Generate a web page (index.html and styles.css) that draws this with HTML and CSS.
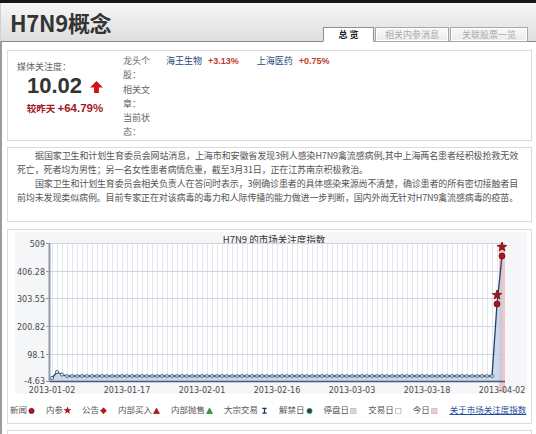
FILE: index.html
```html
<!DOCTYPE html>
<html lang="zh-CN">
<head>
<meta charset="utf-8">
<title>H7N9概念</title>
<link rel="stylesheet" href="styles.css">
</head>
<body>
<div class="topbar"></div>
<header class="header">
  <h1 class="title">H7N9概念</h1>
  <nav class="tabs">
    <a class="tab tab-1 active">总 览</a>
    <a class="tab tab-2">相关内参消息</a>
    <a class="tab tab-3">关联股票一览</a>
  </nav>
</header>
<main class="main">
  <section class="box info">
    <div class="score">
      <div class="score-label">媒体关注度：</div>
      <div class="score-value"><span class="num">10.02</span><svg class="arrow" viewBox="0 0 14 13"><polygon points="7,0 14,7 9.6,7 9.6,13 4.4,13 4.4,7 0,7" fill="#d0121b"/></svg></div>
      <div class="score-delta">较昨天 <b>+64.79%</b></div>
    </div>
    <div class="labels">
      <div>龙头个股：</div>
      <div>相关文章：</div>
      <div>当前状态：</div>
    </div>
    <div class="leaders">
      <span class="stock">海王生物</span><span class="chg">+3.13%</span>
      <span class="stock second">上海医药</span><span class="chg">+0.75%</span>
    </div>
  </section>

  <section class="box news">
    <p><span class="ln ind">据国家卫生和计划生育委员会网站消息，上海市和安徽省发现3例人感染H7N9禽流感病例,其中上海两名患者经积极抢救无效</span><span class="ln end">死亡，死者均为男性；另一名女性患者病情危重，截至3月31日，正在江苏南京积极救治。</span></p>
    <p><span class="ln ind">国家卫生和计划生育委员会相关负责人在答问时表示，3例确诊患者的具体感染来源尚不清楚，确诊患者的所有密切接触者目</span><span class="ln">前均未发现类似病例。目前专家正在对该病毒的毒力和人际传播的能力做进一步判断，国内外尚无针对H7N9禽流感病毒的疫苗。</span></p>
  </section>

  <section class="box chart">
    <svg class="plot" width="512" height="162" viewBox="0 0 512 162">
      <defs>
        <pattern id="vgrid" patternUnits="userSpaceOnUse" x="0" y="0" width="5" height="10">
          <rect x="2" y="0" width="1" height="10" fill="#e3e7ed"/>
        </pattern>
        <pattern id="dots" patternUnits="userSpaceOnUse" x="34.5" y="141" width="5" height="6">
          <circle cx="2.5" cy="3" r="1.6" fill="#e4ebf4" stroke="#2b4a78" stroke-width="0.8"/>
        </pattern>
        <polygon id="star" points="0,-5 1.18,-1.62 4.76,-1.55 1.9,0.62 2.94,4.05 0,2 -2.94,4.05 -1.9,0.62 -4.76,-1.55 -1.18,-1.62"/>
      </defs>
      <rect x="0" y="0" width="512" height="162" rx="3" fill="#f5f6f8"/>
      <text class="ctitle" x="259" y="10.5" text-anchor="middle">H7N9 的市场关注度指数</text>
      <rect x="35" y="11.5" width="455" height="138" fill="#ffffff"/>
      <rect x="35" y="11.5" width="455" height="138" fill="url(#vgrid)"/>
      <g stroke="#cfd6df" stroke-width="1">
        <line x1="35" y1="11.5" x2="490" y2="11.5"/>
        <line x1="35" y1="39.5" x2="490" y2="39.5"/>
        <line x1="35" y1="66.5" x2="490" y2="66.5"/>
        <line x1="35" y1="94.5" x2="490" y2="94.5"/>
        <line x1="35" y1="122.5" x2="490" y2="122.5"/>
      </g>
      <g stroke="#8e99aa" stroke-width="1">
        <line x1="31" y1="11.5" x2="35" y2="11.5"/>
        <line x1="31" y1="39.5" x2="35" y2="39.5"/>
        <line x1="31" y1="66.5" x2="35" y2="66.5"/>
        <line x1="31" y1="94.5" x2="35" y2="94.5"/>
        <line x1="31" y1="122.5" x2="35" y2="122.5"/>
        <line x1="31" y1="149.5" x2="35" y2="149.5"/>
      </g>
      <g class="ylab" text-anchor="end">
        <text x="30" y="14.5">509</text>
        <text x="30" y="42.5">406.28</text>
        <text x="30" y="69.5">303.55</text>
        <text x="30" y="97.5">200.82</text>
        <text x="30" y="125.5">98.1</text>
        <text x="30" y="151.5">-4.63</text>
      </g>
      <rect x="484" y="11.5" width="6" height="149" fill="#efbcc3" opacity="0.85"/>
      <path d="M37 146 L42 140 L47 142.5 L52 144 H477 L482 72 L487 24 V149.5 H37 Z" fill="#bccde3" opacity="0.75"/>
      <path d="M37 146 L42 140 L47 142.5 L52 144 H477 L482 72 L487 24" fill="none" stroke="#22406c" stroke-width="1.3"/>
      <rect x="49.5" y="141" width="430" height="6" fill="url(#dots)"/>
      <g fill="#e4ebf4" stroke="#2b4a78" stroke-width="0.8">
        <circle cx="37" cy="146" r="1.6"/>
        <circle cx="42" cy="140" r="1.6"/>
        <circle cx="47" cy="142.5" r="1.6"/>
      </g>
      <line x1="34.5" y1="11" x2="34.5" y2="150" stroke="#8e99aa" stroke-width="2"/>
      <line x1="35" y1="149.5" x2="490" y2="149.5" stroke="#4a5a72" stroke-width="1.5"/>
      <g fill="#b5111b" stroke="#6e0a0a" stroke-width="0.8">
        <circle cx="482" cy="72" r="3"/>
        <circle cx="487" cy="24" r="3"/>
        <use href="#star" transform="translate(482 63)"/>
        <use href="#star" transform="translate(487 15)"/>
      </g>
      <g class="xlab" text-anchor="middle">
        <text x="37" y="160.5">2013-01-02</text>
        <text x="112" y="160.5">2013-01-17</text>
        <text x="187" y="160.5">2013-02-01</text>
        <text x="262" y="160.5">2013-02-16</text>
        <text x="337" y="160.5">2013-03-03</text>
        <text x="412" y="160.5">2013-03-18</text>
        <text x="487" y="160.5">2013-04-02</text>
      </g>
    </svg>
    <div class="legend">
      <span class="lg">新闻<svg class="ic" viewBox="0 0 8 8"><circle cx="4" cy="4.5" r="3" fill="#b5111b" stroke="#6e0a0a" stroke-width="0.7"/></svg></span>
      <span class="lg">内参<svg class="ic" viewBox="-5 -5 10 10"><use href="#star" fill="#c3121c" stroke="#7a0a0a" stroke-width="0.6"/></svg></span>
      <span class="lg">公告<svg class="ic" viewBox="0 0 8 8"><polygon points="4,0.8 7.4,4.3 4,7.8 0.6,4.3" fill="#c3121c" stroke="#7a0a0a" stroke-width="0.6"/></svg></span>
      <span class="lg">内部买入<svg class="ic" viewBox="0 0 8 8"><polygon points="4,1 7.6,7.6 0.4,7.6" fill="#c3121c" stroke="#7a0a0a" stroke-width="0.5"/></svg></span>
      <span class="lg">内部抛售<svg class="ic" viewBox="0 0 8 8"><polygon points="4,1 7.6,7.6 0.4,7.6" fill="#2e9a38" stroke="#1a6a22" stroke-width="0.5"/></svg></span>
      <span class="lg">大宗交易<svg class="ic ic-i" viewBox="0 0 8 8"><path d="M1.5 1.5 H6.5 M4 1.5 V7 M1.5 7 H6.5" stroke="#1f3560" stroke-width="1.5" fill="none"/></svg></span>
      <span class="lg">解禁日<svg class="ic" viewBox="0 0 8 8"><circle cx="4" cy="4.5" r="3" fill="#0f4d4a" stroke="#5d8c89" stroke-width="0.8"/></svg></span>
      <span class="lg">停盘日<svg class="ic" viewBox="0 0 8 8"><rect x="0.8" y="1.8" width="6" height="6" fill="#d4d6da" stroke="#b5b8bd" stroke-width="0.8"/></svg></span>
      <span class="lg">交易日<svg class="ic" viewBox="0 0 8 8"><rect x="0.8" y="1.8" width="6" height="6" fill="#ffffff" stroke="#a9adb3" stroke-width="0.8"/></svg></span>
      <span class="lg">今日<svg class="ic" viewBox="0 0 8 8"><rect x="0.8" y="1.8" width="6" height="6" fill="#f2cad0" stroke="#dba9b1" stroke-width="0.8"/></svg></span>
      <a class="lg-link">关于市场关注度指数</a>
    </div>
  </section>

  <section class="box next"></section>
</main>
</body>
</html>
```

FILE: styles.css
```css
* {
  box-sizing: border-box;
}

html, body {
  margin: 0;
  padding: 0;
  background: #ffffff;
}

body {
  width: 536px;
  height: 434px;
  overflow: hidden;
  font-family: "Noto Sans CJK SC", "Liberation Sans", sans-serif;
  font-size: 9px;
  color: #555;
}

.topbar {
  height: 3px;
  background: #161616;
}

.header {
  height: 39px;
  display: flex;
  justify-content: space-between;
  padding: 0 8px 0 9px;
  background: linear-gradient(#f6f6f6, #dedede);
  border-bottom: 1px solid #8a8a8a;
  border-left: 1px solid #d0d0d0;
}

.title {
  margin: 0;
  font-size: 22px;
  line-height: 38px;
  font-weight: bold;
  color: #333;
  letter-spacing: -0.3px;
}

.tabs {
  align-self: flex-end;
  display: flex;
  gap: 1px;
  margin-bottom: -1px;
}

.tab {
  display: block;
  height: 15px;
  border: 1px solid #a7a7a7;
  background: linear-gradient(#f9f9f9, #ebebeb);
  box-shadow: inset 0 0 0 1px #ffffff;
  color: #ababab;
  font-size: 9px;
  line-height: 13px;
  text-align: center;
}

.tab-1 { width: 51px; }
.tab-2 { width: 74px; }
.tab-3 { width: 78px; }

.tab.active {
  background: #ffffff;
  border-color: #8f8f8f;
  border-bottom-color: #ffffff;
  box-shadow: none;
  color: #222;
  font-weight: bold;
}

.main {
  border-left: 2px solid #9c9c9c;
  padding: 8px 4px 0 5px;
  height: 392px;
}

.box {
  border: 1px solid #dcdcdc;
  background: #fff;
}

/* info box */
.info {
  height: 91px;
  display: flex;
  align-items: flex-start;
  margin-bottom: 6px;
}

.score {
  width: 96px;
  margin-left: 9px;
  padding-top: 10px;
}

.score-label {
  font-size: 9px;
  line-height: 12px;
  color: #666;
}

.score-value {
  margin-top: 2px;
  display: flex;
  justify-content: center;
  align-items: center;
  height: 22px;
}

.num {
  font-family: "Liberation Sans", Arial, sans-serif;
  font-weight: bold;
  font-size: 22px;
  line-height: 22px;
  color: #333;
}

.arrow {
  width: 13px;
  height: 12px;
  margin-left: 8px;
  margin-top: 2px;
}

.score-delta {
  margin-top: 4px;
  text-align: center;
  font-size: 9.5px;
  line-height: 14px;
  color: #a3161c;
  font-weight: bold;
}

.score-delta b {
  font-family: "Liberation Sans", Arial, sans-serif;
  font-size: 11.5px;
}

.labels {
  width: 28px;
  margin-left: 10px;
  margin-top: 3px;
  font-size: 9px;
  line-height: 14.3px;
  color: #666;
}

.leaders {
  margin-left: 15px;
  margin-top: 3px;
  line-height: 14px;
  display: flex;
}

.stock {
  color: #234a7c;
  font-size: 9px;
}

.stock.second {
  margin-left: 18px;
}

.chg {
  margin-left: 6px;
  font-family: "Liberation Sans", Arial, sans-serif;
  font-weight: bold;
  font-size: 9px;
  color: #c0392b;
}

/* news */
.news {
  height: 75px;
  padding: 1px 13px 16px 9px;
  margin-bottom: 7px;
}

.news p {
  margin: 0;
  font-size: 9px;
  line-height: 14px;
  color: #555;
  letter-spacing: -0.15px;
}

.ln {
  display: block;
  text-align: justify;
  text-align-last: justify;
}

.ln.ind {
  text-indent: 18px;
}

.ln.end {
  text-align-last: left;
}

/* chart */
.chart {
  height: 195px;
  padding: 2px 3px 0 2px;
  margin-bottom: 6px;
}

.plot {
  display: block;
  margin-left: 5px;
}

.ctitle {
  font-family: "Noto Sans CJK SC", sans-serif;
  font-size: 9.5px;
  fill: #333;
}

.ylab, .xlab {
  font-family: "DejaVu Sans", Verdana, sans-serif;
  font-size: 8px;
  fill: #4a4a4a;
}

.legend {
  height: 29px;
  display: flex;
  align-items: center;
  font-size: 8.5px;
  color: #555;
}

.lg {
  display: flex;
  align-items: center;
  margin-right: 11px;
  white-space: nowrap;
}

.ic {
  width: 7px;
  height: 7px;
  margin-left: 1px;
  margin-top: 3px;
}

.ic-i {
  margin-left: 3px;
}

.lg-link {
  color: #1c4e9b;
  text-decoration: underline;
  white-space: nowrap;
  margin-left: 1px;
}

.next {
  height: 20px;
  border-bottom: none;
}
```
